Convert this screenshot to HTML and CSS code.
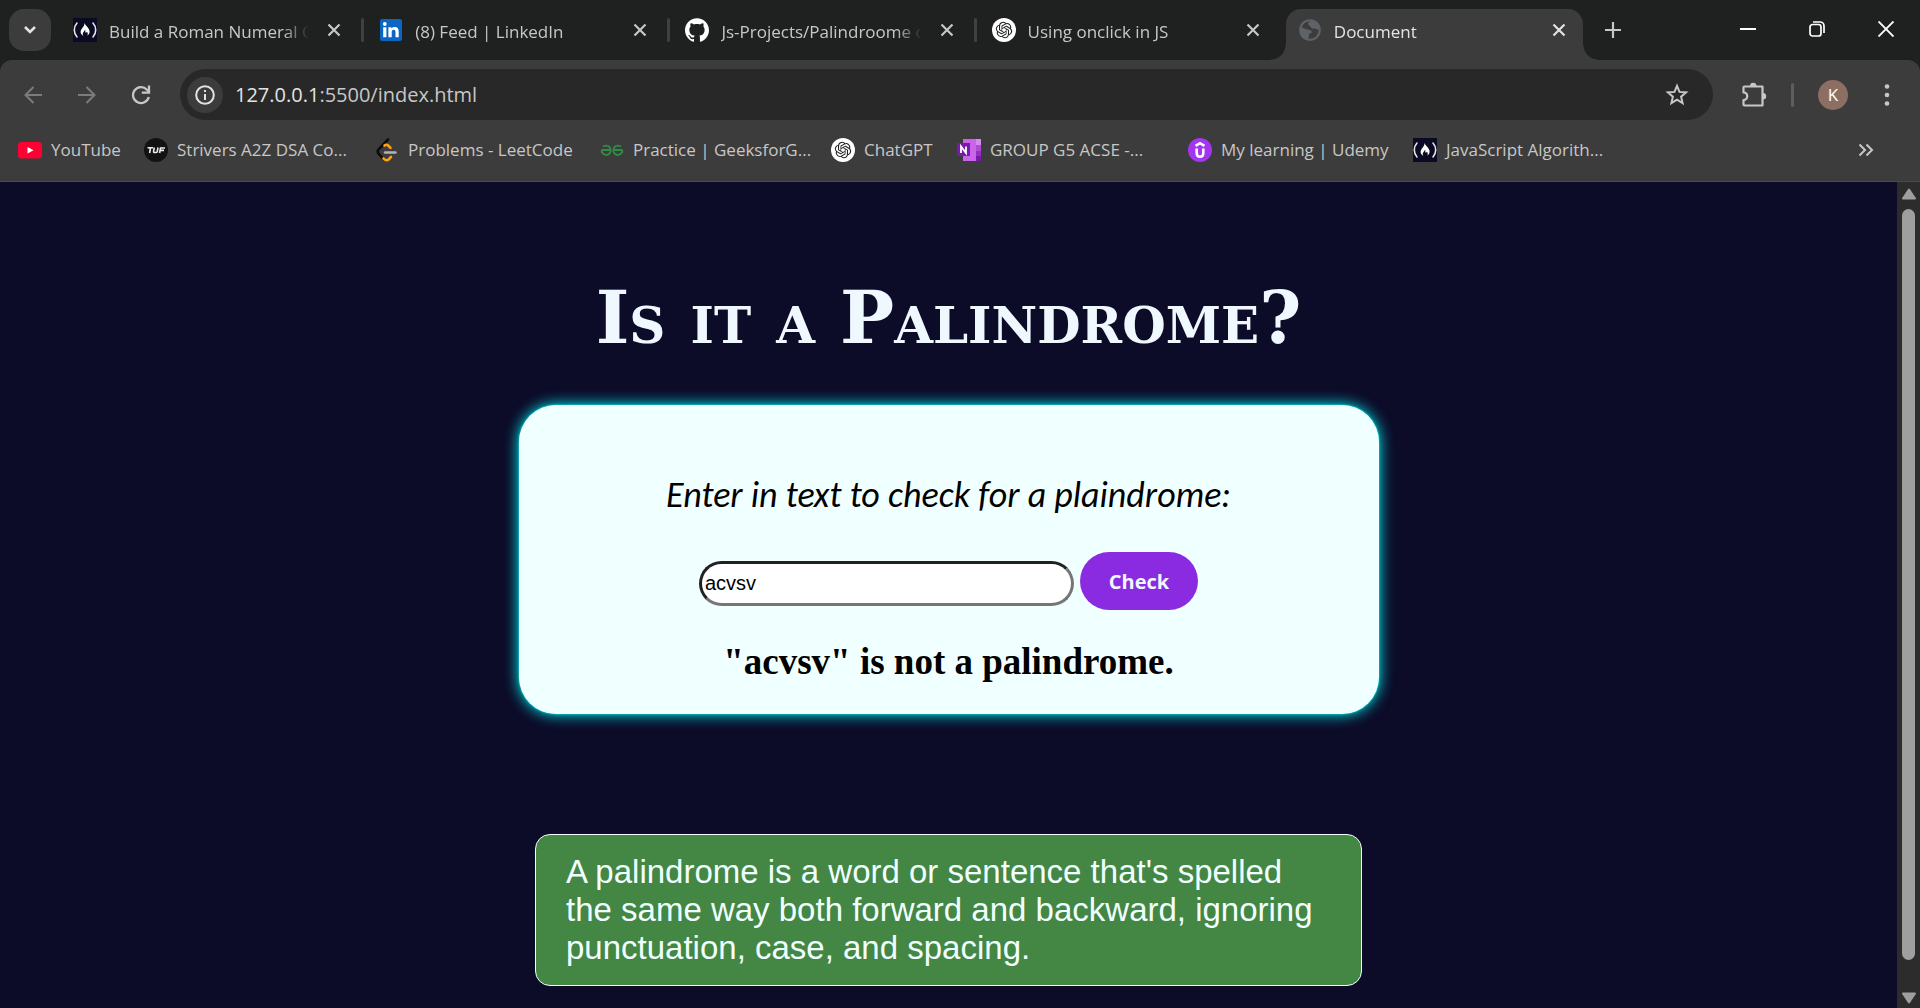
FILE: index.html
```html
<!DOCTYPE html>
<html lang="en">
<head>
<meta charset="utf-8">
<title>Document</title>
<link rel="stylesheet" href="styles.css">
</head>
<body>
<svg class="defs" aria-hidden="true">
  <symbol id="i-fcc" viewBox="0 0 24 24"><rect width="24" height="24" fill="#0a0a23"/><path d="M4 5C.4 9 .4 15 4 19M20 5c3.600 4 3.600 10 0 14" fill="none" stroke="#e4e4ee" stroke-width="1.600" stroke-linecap="round"/><path d="M11.500 5c1.200 3.400 5.500 5.200 5.100 9-.2 1.800-1.200 3-2.400 3.600 1-1.400.7-2.900-.4-3.900-.3 1-.9 1.200-1.300.9-.4-.9.100-2-.5-3-.3 2-2.200 2.600-2.300 4.300 0 .8.300 1.400.8 1.900-1.600-.6-2.900-2-2.900-3.800 0-3.200 3.900-5 3.900-9z" fill="#fff"/></symbol>
  <symbol id="i-gpt" viewBox="0 0 24 24"><circle cx="12" cy="12" r="12" fill="#fff"/><path transform="translate(3.800 3.800) scale(.684)" fill="#222" d="M22.2819 9.8211a5.9847 5.9847 0 0 0-.5157-4.9108 6.0462 6.0462 0 0 0-6.5098-2.9A6.0651 6.0651 0 0 0 4.9807 4.1818a5.9847 5.9847 0 0 0-3.9977 2.9 6.0462 6.0462 0 0 0 .7427 7.0966 5.98 5.98 0 0 0 .511 4.9107 6.051 6.051 0 0 0 6.5146 2.9001A5.9847 5.9847 0 0 0 13.2599 24a6.0557 6.0557 0 0 0 5.7718-4.2058 5.9894 5.9894 0 0 0 3.9977-2.9001 6.0557 6.0557 0 0 0-.7475-7.0729zm-9.022 12.6081a4.4755 4.4755 0 0 1-2.8764-1.0408l.1419-.0804 4.7783-2.7582a.7948.7948 0 0 0 .3927-.6813v-6.7369l2.02 1.1686a.071.071 0 0 1 .038.052v5.5826a4.504 4.504 0 0 1-4.4945 4.4944zm-9.6607-4.1254a4.4708 4.4708 0 0 1-.5346-3.0137l.142.0852 4.783 2.7582a.7712.7712 0 0 0 .7806 0l5.8428-3.3685v2.3324a.0804.0804 0 0 1-.0332.0615L9.74 19.9502a4.4992 4.4992 0 0 1-6.1408-1.6464zM2.3408 7.8956a4.485 4.485 0 0 1 2.3655-1.9728V11.600a.7664.7664 0 0 0 .3879.6765l5.8144 3.3543-2.0201 1.1685a.0757.0757 0 0 1-.071 0l-4.8303-2.7865A4.504 4.504 0 0 1 2.3408 7.872zm16.5963 3.8558L13.1038 8.364 15.1192 7.200a.0757.0757 0 0 1 .071 0l4.8303 2.7913a4.4944 4.4944 0 0 1-.6765 8.1042v-5.6772a.79.79 0 0 0-.407-.667zm2.0107-3.0231l-.142-.0852-4.7735-2.7818a.7759.7759 0 0 0-.7854 0L9.409 9.2297V6.8974a.0662.0662 0 0 1 .0284-.0615l4.8303-2.7866a4.4992 4.4992 0 0 1 6.6802 4.66zM8.3065 12.863l-2.02-1.1638a.0804.0804 0 0 1-.038-.0567V6.0742a4.4992 4.4992 0 0 1 7.3757-3.4537l-.142.0805L8.704 5.459a.7948.7948 0 0 0-.3927.6813zm1.0976-2.3654l2.602-1.4998 2.6069 1.4998v2.9994l-2.5974 1.4997-2.6067-1.4997Z"/></symbol>
  <symbol id="i-x" viewBox="0 0 14 14"><path d="M1.500 1.500l11 11M12.500 1.500l-11 11" fill="none" stroke="currentColor" stroke-width="2.200"/></symbol>
</svg>

<header class="chrome">
  <div class="tabstrip">
    <button class="tab-search" aria-label="Search tabs"><svg width="14" height="10" viewBox="0 0 14 10"><path d="M2 2l5 5 5-5" fill="none" stroke="#e3e3e3" stroke-width="2.600"/></svg></button>
    <div class="tabs">
      <div class="tab sep"><svg class="ico"><use href="#i-fcc"/></svg><span class="title">Build a Roman Numeral C</span><button class="close" aria-label="Close tab"><svg><use href="#i-x"/></svg></button></div>
      <div class="tab sep"><svg class="ico" viewBox="0 0 24 24"><rect x="1" y="1" width="22" height="22" rx="2" fill="#0a66c2"/><circle cx="5.800" cy="6" r="1.900" fill="#fff"/><path d="M4.200 9.300h3.200v10H4.200zM9.400 9.300h3v1.400c.6-1 1.700-1.700 3.300-1.700 3 0 4 1.900 4 4.700v5.600h-3.200v-5c0-1.500-.3-2.600-1.700-2.600-1.600 0-2.100 1.200-2.100 2.600v5H9.400z" fill="#fff"/></svg><span class="title">(8) Feed | LinkedIn</span><button class="close" aria-label="Close tab"><svg><use href="#i-x"/></svg></button></div>
      <div class="tab sep"><svg class="ico" viewBox="0 0 24 24"><path fill="#fff" d="M12 .297c-6.630 0-12 5.373-12 12 0 5.303 3.438 9.800 8.205 11.385.6.113.82-.258.82-.577 0-.285-.01-1.040-.015-2.040-3.338.724-4.042-1.610-4.042-1.610C4.422 18.070 3.633 17.700 3.633 17.700c-1.087-.744.084-.729.084-.729 1.205.084 1.838 1.236 1.838 1.236 1.070 1.835 2.809 1.305 3.495.998.108-.776.417-1.305.76-1.605-2.665-.3-5.466-1.332-5.466-5.930 0-1.310.465-2.380 1.235-3.220-.135-.303-.54-1.523.105-3.176 0 0 1.005-.322 3.300 1.230.96-.267 1.980-.399 3-.405 1.020.006 2.040.138 3 .405 2.280-1.552 3.285-1.230 3.285-1.230.645 1.653.24 2.873.12 3.176.765.84 1.230 1.910 1.230 3.220 0 4.610-2.805 5.625-5.475 5.920.42.36.81 1.096.81 2.220 0 1.606-.015 2.896-.015 3.286 0 .315.210.69.825.57C20.565 22.092 24 17.592 24 12.297c0-6.627-5.373-12-12-12"/></svg><span class="title">Js-Projects/Palindroome c</span><button class="close" aria-label="Close tab"><svg><use href="#i-x"/></svg></button></div>
      <div class="tab"><svg class="ico"><use href="#i-gpt"/></svg><span class="title">Using onclick in JS</span><button class="close" aria-label="Close tab"><svg><use href="#i-x"/></svg></button></div>
      <div class="tab active"><svg class="ico" viewBox="0 0 24 24"><circle cx="12" cy="12" r="9.800" fill="#3c3c3c" stroke="#5f6368" stroke-width="2"/><path d="M3 9l6 2.500 3 .5c1.500.5 2 1.500 1.500 3L11 16v2l-1 3.500C5 20.500 2 17 2 12zM13 2.500c-1 1.500-3 1.500-3 3.500 0 1.500 2 1 2.500 2.500S14 11 16 10.500s3 1.500 5.500 1.500C22 7 18 3 13 2.500z" fill="#5f6368"/></svg><span class="title">Document</span><button class="close" aria-label="Close tab"><svg><use href="#i-x"/></svg></button></div>
    </div>
    <button class="new-tab" aria-label="New tab"><svg width="16" height="16" viewBox="0 0 16 16"><path d="M8 0v16M0 8h16" stroke="#c7c7c7" stroke-width="2.200"/></svg></button>
    <div class="window-controls">
      <button aria-label="Minimize"><svg width="16" height="16" viewBox="0 0 16 16"><path d="M0 8h16" stroke="#fff" stroke-width="2"/></svg></button>
      <button aria-label="Restore"><svg width="16" height="16" viewBox="0 0 16 16"><g fill="none" stroke="#fff" stroke-width="1.700"><rect x="1" y="3.500" width="11" height="11.500" rx="2.500"/><path d="M4 1h7a4 4 0 0 1 4 4v7"/></g></svg></button>
      <button aria-label="Close"><svg width="16" height="16" viewBox="0 0 16 16"><path d="M.5.5l15 15M15.500.5l-15 15" stroke="#fff" stroke-width="1.900"/></svg></button>
    </div>
  </div>

  <div class="toolbar">
    <div class="nav">
      <button aria-label="Back"><svg width="20" height="20" viewBox="0 0 20 20"><path d="M19 10H3M10.500 2L2.500 10l8 8" fill="none" stroke="#7c7c7c" stroke-width="2"/></svg></button>
      <button aria-label="Forward"><svg width="20" height="20" viewBox="0 0 20 20"><path d="M1 10h16M9.500 2l8 8-8 8" fill="none" stroke="#7c7c7c" stroke-width="2"/></svg></button>
      <button aria-label="Reload"><svg width="20" height="20" viewBox="0 0 20 20"><path d="M17.800 12a8 8 0 1 1-1.800-7.300l1.500 1.600" fill="none" stroke="#c7c7c7" stroke-width="2.300"/><path d="M18 .5v7.200h-7.200" fill="none" stroke="#c7c7c7" stroke-width="2.300"/></svg></button>
    </div>
    <div class="omnibox">
      <button class="info" aria-label="View site information"><svg width="20" height="20" viewBox="0 0 20 20"><circle cx="10" cy="10" r="8.800" fill="none" stroke="#e3e3e3" stroke-width="2"/><path d="M10 9v6M10 5v2" stroke="#e3e3e3" stroke-width="2"/></svg></button>
      <span class="url"><b>127.0.0.1</b>:5500/index.html</span>
      <button class="star" aria-label="Bookmark this tab"><svg width="24" height="24" viewBox="0 0 24 24"><path d="M12 2.800l2.500 6.100 6.600.5-5 4.300 1.500 6.400-5.600-3.400-5.600 3.400 1.500-6.400-5-4.300 6.600-.5z" fill="none" stroke="#c7c7c7" stroke-width="2"/></svg></button>
    </div>
    <button class="ext" aria-label="Extensions"><svg width="26" height="26" viewBox="0 0 26 26"><path d="M3.500 4.500h18v19h-18a1 1 0 0 1-1-1V18c5 0 5-7.500 0-7.500v-5a1 1 0 0 1 1-1z" fill="none" stroke="#c7c7c7" stroke-width="2.200" stroke-linejoin="round"/><path d="M9 4a3.200 3.200 0 0 1 6.400 0zM22 11a3.200 3.200 0 0 1 0 6.400z" fill="#c7c7c7"/></svg></button>
    <span class="divider"></span>
    <button class="avatar" aria-label="Profile">K</button>
    <button class="menu" aria-label="Menu"><svg width="6" height="22" viewBox="0 0 6 22"><g fill="#c7c7c7"><circle cx="3" cy="2.500" r="2.300"/><circle cx="3" cy="11" r="2.300"/><circle cx="3" cy="19.500" r="2.300"/></g></svg></button>
  </div>

  <nav class="bookmarks" aria-label="Bookmarks">
    <a class="short" href="#"><svg class="ico" viewBox="0 0 24 24"><rect y="4" width="24" height="16.500" rx="3.500" fill="#ff0033"/><path d="M9.500 9v6.500l6-3.250z" fill="#fff"/></svg>YouTube</a>
    <a class="long" href="#"><svg class="ico" viewBox="0 0 24 24"><circle cx="12" cy="12" r="12" fill="#121212"/><path d="M3.500 9.800h5.500M6.500 9.800L5.600 15M10.300 9.500l-.7 3.700q-.2 1.300 1 1.300h1.200q1.200 0 1.500-1.300l.7-3.700M15.600 15l.9-5h4.500M16.200 12.400h3.800" fill="none" stroke="#eee" stroke-width="1.600"/></svg>Strivers A2Z DSA Co...</a>
    <a class="medium" href="#"><svg class="ico" viewBox="0 0 24 24"><path d="M13 1.500L3.500 11.500q-1.700 2 0 4l4 4.500" fill="none" stroke="#0b0b0b" stroke-width="2.600" stroke-linecap="round"/><path d="M9.500 7.500q1.800-1.500 3.700 0l2.300 2.300M8.500 20.500q3 3.300 5.500.6l2-2.200" fill="none" stroke="#ffa116" stroke-width="2.600" stroke-linecap="round"/><path d="M10 14.500h10.500" stroke="#b3b3b3" stroke-width="2.400" stroke-linecap="round"/></svg>Problems - LeetCode</a>
    <a class="long" href="#"><svg class="ico" viewBox="0 0 24 24"><path d="M1.500 12H11M3 8.500q4-2 6.500.5 2.300 3.500 0 6.500-2.500 2.500-5.500.8-2.500-1.300-2.300-4.300M22.500 12H13M21 8.500q-4-2-6.500.5-2.300 3.500 0 6.500 2.500 2.500 5.500.8 2.500-1.300 2.300-4.300" fill="none" stroke="#2f8d46" stroke-width="1.800"/></svg>Practice | GeeksforG...</a>
    <a class="short" href="#"><svg class="ico"><use href="#i-gpt"/></svg>ChatGPT</a>
    <a class="long" href="#"><svg class="ico" viewBox="0 0 24 24"><rect x="6" y="1" width="18" height="22" fill="#ca64ea"/><path d="M19 1h5v6h-5z" fill="#d58cf0"/><path d="M19 7h5v6h-5z" fill="#ae4bd5"/><path d="M19 13h5v5h-5z" fill="#9332bf"/><path d="M19 18h5v5h-5z" fill="#7719aa"/><rect y="5" width="13" height="13" fill="#7719aa"/><path d="M4 15V8.500l5 6.500V8.500" fill="none" stroke="#fff" stroke-width="1.800"/></svg>GROUP G5 ACSE -...</a>
    <a class="medium" href="#"><svg class="ico" viewBox="0 0 24 24"><circle cx="12" cy="12" r="12" fill="#a435f0"/><path d="M7.500 7.800L12 5.200l4.500 2.600M8.700 10.500v4.800q0 3.500 3.300 3.500t3.300-3.500v-4.800" fill="none" stroke="#fff" stroke-width="2.600"/></svg>My learning | Udemy</a>
    <a class="long" href="#"><svg class="ico"><use href="#i-fcc"/></svg>JavaScript Algorith...</a>
    <button class="more" aria-label="More bookmarks"><svg width="16" height="14" viewBox="0 0 16 14"><path d="M1.500 1.500L7 7l-5.500 5.500M8.500 1.500L14 7l-5.500 5.500" fill="none" stroke="#c7c7c7" stroke-width="2"/></svg></button>
  </nav>
</header>

<div class="viewport">
  <main class="page">
    <h1>Is it a Palindrome?</h1>
    <section class="card">
      <label for="text-input">Enter in text to check for a plaindrome:</label>
      <div class="row">
        <input id="text-input" type="text" value="acvsv">
        <button class="check">Check</button>
      </div>
      <h2>"acvsv" is not a palindrome.</h2>
    </section>
    <p class="hint">A palindrome is a word or sentence that's spelled the same way both forward and backward, ignoring punctuation, case, and spacing.</p>
  </main>
  <div class="scrollbar" aria-hidden="true">
    <svg width="16" height="12" viewBox="0 0 16 12"><path d="M8 1.500l6 9H2z" fill="#9f9f9f" stroke="#9f9f9f" stroke-width="2" stroke-linejoin="round"/></svg>
    <span class="thumb"></span>
    <svg width="16" height="12" viewBox="0 0 16 12"><path d="M8 10.500l6-9H2z" fill="#9f9f9f" stroke="#9f9f9f" stroke-width="2" stroke-linejoin="round"/></svg>
  </div>
</div>
</body>
</html>
```

FILE: styles.css
```css
* { box-sizing: border-box; }

body {
  margin: 0;
  height: 100vh;
  display: flex;
  flex-direction: column;
  overflow: hidden;
  background: #1f2120;
  font-family: "Segoe UI", "Open Sans", sans-serif;
}

button {
  border: 0;
  padding: 0;
  background: none;
  color: inherit;
  font-family: inherit;
  display: flex;
  align-items: center;
  justify-content: center;
  flex: none;
}

svg { display: block; flex: none; }
.defs { position: absolute; width: 0; height: 0; }
.ico { width: 24px; height: 24px; }

/* Tab strip */
.tabstrip {
  display: flex;
  height: 60px;
  color: #c7c7c7;
}
.tab-search {
  width: 42px;
  height: 42px;
  margin: 9px 10px 9px 9px;
  border-radius: 15px;
  background: #3c3c3c;
}
.tabs {
  display: flex;
  gap: 9px;
  padding-top: 9px;
  flex: 0 1 1522px;
  min-width: 0;
}
.tab {
  position: relative;
  flex: 1 1 0;
  min-width: 0;
  display: flex;
  align-items: center;
  padding: 0 17px 9px 12px;
}
.title {
  flex: 1;
  min-width: 0;
  margin: 3px 14px 0 12px;
  overflow: hidden;
  white-space: nowrap;
  font-size: 17px;
  line-height: 24px;
  -webkit-mask-image: linear-gradient(to right, #000 calc(100% - 30px), transparent calc(100% - 4px));
  mask-image: linear-gradient(to right, #000 calc(100% - 30px), transparent calc(100% - 4px));
}
.close svg { width: 14px; height: 14px; }
.tab.sep::after {
  content: "";
  position: absolute;
  right: -6px;
  top: 9px;
  width: 3px;
  height: 24px;
  border-radius: 2px;
  background: #3f4140;
}
.tab.active {
  background: #3c3c3c;
  border-radius: 15px 15px 0 0;
  color: #e3e3e3;
}
.tab.active::before,
.tab.active::after {
  content: "";
  position: absolute;
  bottom: 0;
  width: 15px;
  height: 15px;
}
.tab.active::before {
  left: -15px;
  background: radial-gradient(circle at 0 0, transparent 14px, #3c3c3c 15px);
}
.tab.active::after {
  right: -15px;
  background: radial-gradient(circle at 100% 0, transparent 14px, #3c3c3c 15px);
}
.new-tab {
  width: 36px;
  height: 60px;
  margin-left: 12px;
}
.window-controls {
  display: flex;
  margin-left: auto;
}
.window-controls button { width: 69px; height: 58px; }

/* Address bar row */
.toolbar {
  display: flex;
  align-items: center;
  padding: 9px 30px 2px 6px;
  background: #3c3c3c;
  border-radius: 12px 12px 0 0;
}
.nav { display: flex; }
.nav button { width: 54px; height: 51px; }
.omnibox {
  flex: 1;
  display: flex;
  align-items: center;
  height: 51px;
  margin-left: 12px;
  padding: 0 24px 0 7px;
  border-radius: 26px;
  background: #282828;
}
.info {
  width: 36px;
  height: 36px;
  border-radius: 50%;
  background: #3c3c3c;
}
.url {
  flex: 1;
  margin-left: 12px;
  color: #c7c7c7;
  font-size: 20px;
  line-height: 28px;
}
.url b { font-weight: 400; color: #e3e3e3; }
.ext { margin-left: 28px; }
.divider {
  width: 3px;
  height: 24px;
  margin: 0 24px;
  border-radius: 2px;
  background: #5e5e5e;
}
.avatar {
  width: 30px;
  height: 30px;
  border-radius: 50%;
  background: #8d6e63;
  color: #fff;
  font-size: 17px;
}
.menu { margin-left: 36px; }

/* Bookmarks bar */
.bookmarks {
  display: flex;
  align-items: center;
  height: 60px;
  padding: 0 46px 4px 18px;
  background: #3c3c3c;
  border-bottom: 1px solid #4a4a4a;
}
.bookmarks a {
  display: flex;
  align-items: center;
  gap: 9px;
  color: #c7c7c7;
  font-size: 17px;
  line-height: 24px;
  white-space: nowrap;
  text-decoration: none;
}
.short { width: 126px; }
.medium { width: 225px; }
.long { width: 231px; }
.more { margin-left: auto; }

/* Page */
.viewport {
  flex: 1;
  min-height: 0;
  display: flex;
}
.page {
  flex: 1;
  display: flex;
  flex-direction: column;
  align-items: center;
  overflow: hidden;
  background: #0c0b28;
}
h1 {
  margin: 90px 0 41px;
  color: aliceblue;
  font-family: "DejaVu Serif", serif;
  font-size: 72px;
  line-height: 92px;
  font-variant: small-caps;
}
.card {
  width: 860px;
  max-width: 90%;
  display: flex;
  flex-direction: column;
  align-items: center;
  padding: 68px 30px 31px;
  border-radius: 37px;
  background: azure;
  box-shadow: 0 0 15px cyan, 0 0 2px cyan;
}
.card label {
  font-family: Calibri, Carlito, Lato, sans-serif;
  font-size: 36px;
  font-style: italic;
  line-height: 44px;
}
.row {
  display: flex;
  align-items: center;
  gap: 6px;
  margin: 35px 0 31px;
}
.row input {
  width: 375px;
  height: 45px;
  margin-top: 4px;
  padding: 2px 3px;
  border: 3px inset #767676;
  border-radius: 23px;
  background: #fff;
  font: 20px "Liberation Sans", Arial, sans-serif;
}
.check {
  width: 118px;
  height: 58px;
  border-radius: 30px;
  background: blueviolet;
  color: aliceblue;
  font-size: 20px;
  font-weight: 700;
}
h2 {
  margin: 0;
  font-family: "Liberation Serif", serif;
  font-size: 37px;
  line-height: 42px;
}
.hint {
  width: 827px;
  max-width: 90%;
  margin: 120px 0 0;
  padding: 18px 30px;
  border: 1px solid azure;
  border-radius: 15px;
  background: #448644;
  color: azure;
  font-family: "Liberation Sans", Arial, sans-serif;
  font-size: 33px;
  line-height: 38px;
}

/* Scrollbar */
.scrollbar {
  width: 23px;
  display: flex;
  flex-direction: column;
  align-items: center;
  padding: 6px 0 4px;
  background: #2c2c2c;
}
.thumb {
  flex: 1;
  width: 13px;
  margin: 9px 0 32px;
  border-radius: 7px;
  background: #9f9f9f;
}
```
